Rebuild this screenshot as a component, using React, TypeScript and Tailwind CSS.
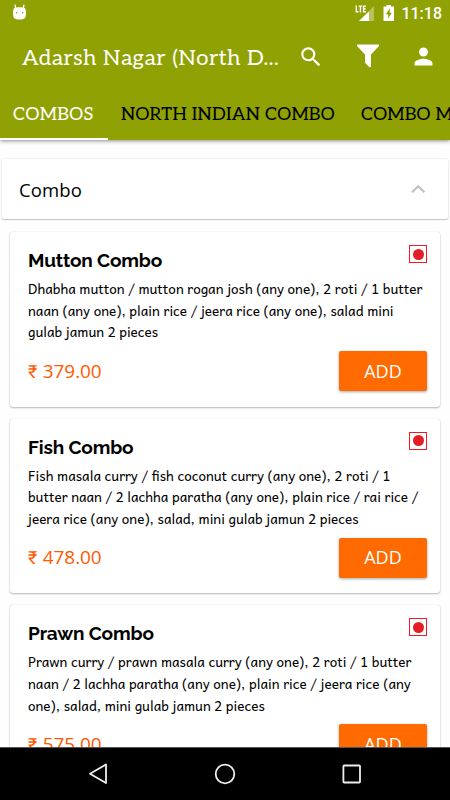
interface MenuItem {
    name: string;
    lines: string[];
    price: string;
}

const items: MenuItem[] = [
    {
        name: "Mutton Combo",
        lines: [
            "Dhabha mutton / mutton rogan josh (any one), 2 roti / 1 butter",
            "naan (any one), plain rice / jeera rice (any one), salad mini",
            "gulab jamun 2 pieces",
        ],
        price: "379.00",
    },
    {
        name: "Fish Combo",
        lines: [
            "Fish masala curry / fish coconut curry (any one), 2 roti / 1",
            "butter naan / 2 lachha paratha (any one), plain rice / rai rice /",
            "jeera rice (any one), salad, mini gulab jamun 2 pieces",
        ],
        price: "478.00",
    },
    {
        name: "Prawn Combo",
        lines: [
            "Prawn curry / prawn masala curry (any one), 2 roti / 1 butter",
            "naan / 2 lachha paratha (any one), plain rice / jeera rice (any",
            "one), salad, mini gulab jamun 2 pieces",
        ],
        price: "575.00",
    },
];

function StatusBar() {
    return (
        <div className="flex h-7 items-center pl-3 pr-2 text-white">
            <svg className="h-4 w-4 -translate-y-[2px]" viewBox="0 0 16 16">
                <path d="M3.6 4 3 .7M11.4 4 12 .7" stroke="currentColor" strokeWidth="1.3" fill="none" />
                <path
                    d="M2 4.2C4 2.9 11 2.9 13 4.2C14.5 7 14.3 12 12.8 14.2C10.5 16 4.5 16 2.2 14.2C.7 12 .5 7 2 4.2Z"
                    fill="currentColor"
                />
                <circle cx="4.6" cy="8.7" r="0.8" fill="#8fa103" />
                <circle cx="10.7" cy="8.7" r="0.8" fill="#8fa103" />
            </svg>
            <div className="ml-auto flex items-center">
                <svg className="h-[18px] w-5 -translate-y-px" viewBox="0 0 20 18">
                    <path d="M4 17 19 2V17Z" fill="#fff" fillOpacity="0.35" />
                    <path d="M4 17 14 7.5V17Z" fill="#fff" />
                    <path
                        d="M1.3 1.5V7.8H3.4M3.6 2.1H7.2M5.4 2V8.4M11 2.1H8.6V7.7H11M8.6 4.9H10.8"
                        stroke="#fff"
                        strokeWidth="1.4"
                        fill="none"
                    />
                </svg>
                <svg className="ml-[8px] h-4 w-3 -translate-y-px" viewBox="0 0 12 16">
                    <path d="M3.5 0H8V1.5H11V16H.5V1.5H3.5Z" fill="#fff" />
                    <path d="M6.8 3.2 2.9 9.2H5.2V13.6L8.8 7.7H6.8Z" fill="#8fa103" />
                </svg>
                <span className="ml-[6px] font-[Roboto] text-[16px] font-medium leading-none">11:18</span>
            </div>
        </div>
    );
}

function Toolbar() {
    return (
        <div className="flex h-[58px] items-center pl-[22px] text-white">
            <h1 className="w-[256px] whitespace-nowrap pt-[2px] font-[Aleo,'DejaVu_Serif',serif] text-[22px] leading-none tracking-[0.45px]">
                Adarsh Nagar (North D...
            </h1>
            <svg className="ml-[20px] h-[26px] w-[26px]" viewBox="0 0 24 24" fill="currentColor">
                <path d="M15.5 14h-.79l-.28-.27A6.47 6.47 0 0 0 16 9.5 6.5 6.5 0 1 0 9.5 16c1.61 0 3.09-.59 4.23-1.57l.27.28v.79l5 4.99L20.49 19l-4.99-5zm-6 0C7.01 14 5 11.99 5 9.5S7.01 5 9.5 5 14 7.01 14 9.5 11.99 14 9.5 14z" />
            </svg>
            <svg className="ml-[33px] h-6 w-[22px] -translate-y-px" viewBox="0 0 22 24" fill="currentColor">
                <path d="M0 .5H22V2L14 10.5V23L12.5 23.2 8 18.8V10.5L0 2Z" />
            </svg>
            <svg className="ml-[31px] h-[27px] w-[27px] -translate-y-px" viewBox="0 0 24 24" fill="currentColor">
                <path d="M12 12c2.21 0 4-1.79 4-4s-1.79-4-4-4-4 1.79-4 4 1.79 4 4 4zm0 2c-2.67 0-8 1.34-8 4v2h16v-2c0-2.66-5.33-4-8-4z" />
            </svg>
        </div>
    );
}

function Tabs() {
    return (
        <nav className="flex h-[54px] whitespace-nowrap font-[Aleo,'DejaVu_Serif',serif] text-[18px] leading-[58px] tracking-[0.25px] text-black">
            <button className="h-full w-[108px] shrink-0 border-b-2 border-white pl-[13px] text-left tracking-[0.4px] text-white">
                COMBOS
            </button>
            <button className="w-[240px] shrink-0 pl-[13px] text-left">NORTH INDIAN COMBO</button>
            <button className="w-[240px] shrink-0 pl-[13px] text-left">COMBO MEALS</button>
        </nav>
    );
}

function MenuCard({ item }: { item: MenuItem }) {
    return (
        <article className="flex h-[174.7px] shrink-0 flex-col rounded-[3px] bg-white pl-[18px] pr-[13px] pt-[13px] shadow-[0_1px_2px_rgba(0,0,0,0.28),0_0_1px_rgba(0,0,0,0.18)]">
            <div className="flex h-[33px] justify-between">
                <h3 className="whitespace-nowrap pt-[3px] font-[Raleway,Lato,sans-serif] text-[19px] font-bold leading-6 tracking-[-0.15px] text-black">
                    {item.name}
                </h3>
                <span className="flex h-[18px] w-[18px] items-center justify-center border border-[#ed1c24]">
                    <span className="h-[11px] w-[11px] rounded-full bg-[#e31e24]" />
                </span>
            </div>
            <div className="h-[73px] whitespace-nowrap font-[Andika,'Noto_Sans',sans-serif] text-[13.5px] leading-[21.7px] text-black">
                {item.lines.map((line) => (
                    <p key={line}>{line}</p>
                ))}
            </div>
            <div className="flex h-10 items-center justify-between font-['Open_Sans','Noto_Sans',sans-serif]">
                <span className="text-[19px] tracking-[-0.1px] text-[#ff5a00]">
                    <span className="inline-block w-[10px] font-[Roboto] text-[18px]">₹</span> {item.price}
                </span>
                <button className="h-10 w-[88px] rounded-[2px] bg-[#ff6b00] text-[18px] text-white shadow-[0_1px_3px_rgba(0,0,0,0.35)]">
                    ADD
                </button>
            </div>
        </article>
    );
}

function NavigationBar() {
    return (
        <footer className="relative z-10 flex h-[53px] shrink-0 items-center justify-between border-t border-[#555] bg-black px-[86px]">
            <svg className="h-6 w-6" viewBox="0 0 24 24" fill="none" stroke="#eee" strokeWidth="1.8">
                <path d="M20 2.5V21L4 11.8Z" strokeLinejoin="round" />
            </svg>
            <svg className="h-6 w-6" viewBox="0 0 24 24" fill="none" stroke="#eee" strokeWidth="1.8">
                <circle cx="12" cy="12" r="9.3" />
            </svg>
            <svg className="h-6 w-6" viewBox="0 0 24 24" fill="none" stroke="#eee" strokeWidth="1.8">
                <rect x="3.4" y="3.5" width="16.6" height="17" rx="0.8" />
            </svg>
        </footer>
    );
}

export default function App() {
    return (
        <div className="flex h-[800px] w-[450px] flex-col overflow-hidden bg-[#fefefe]">
            <header className="relative z-10 h-[140px] shrink-0 overflow-clip bg-[#8fa103] shadow-[0_1px_4px_rgba(0,0,0,0.45)] [overflow-clip-margin:6px]">
                <StatusBar />
                <Toolbar />
                <Tabs />
            </header>
            <main className="flex min-h-0 flex-1 flex-col overflow-hidden pt-[19px]">
                <section className="mx-[2px] flex h-[60px] shrink-0 items-center justify-between rounded-[2px] bg-white pl-[17px] pr-[22px] shadow-[0_1px_1px_rgba(0,0,0,0.2),0_0_1px_1px_rgba(0,0,0,0.05)]">
                    <h2 className="pt-px font-['Open_Sans','Noto_Sans',sans-serif] text-[18.5px] tracking-[0.1px] text-black">
                        Combo
                    </h2>
                    <svg className="h-4 w-4" viewBox="0 0 16 16" fill="none" stroke="#bfbfc1" strokeWidth="2.2">
                        <path d="M2 11.3 8.2 5.3 14.4 11.3" />
                    </svg>
                </section>
                <div className="mx-[10px] mt-[13px] flex flex-col gap-[12px]">
                    {items.map((item) => (
                        <MenuCard key={item.name} item={item} />
                    ))}
                </div>
            </main>
            <NavigationBar />
        </div>
    );
}
